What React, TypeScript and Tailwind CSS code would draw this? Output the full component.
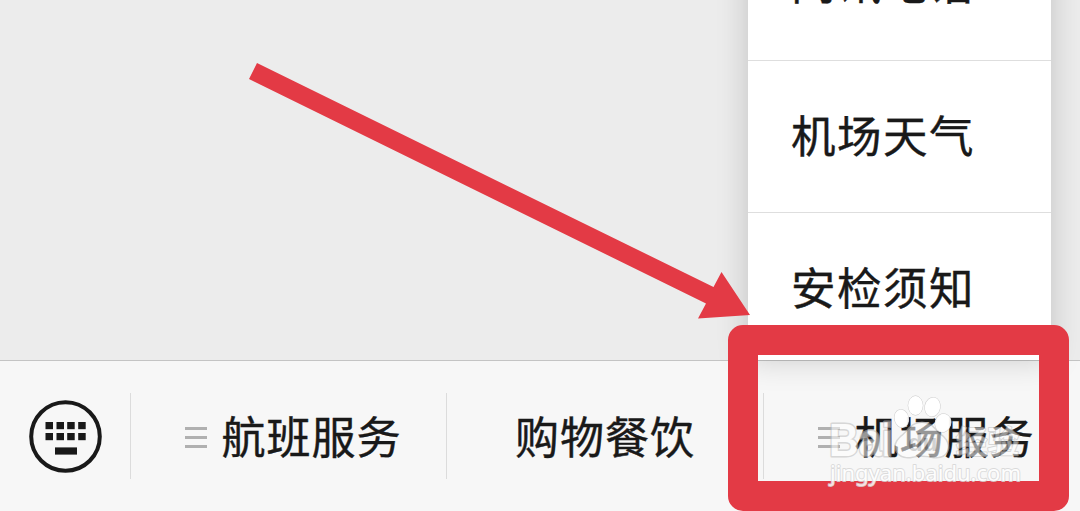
import React from "react";

const menuItems = ["问讯电话", "机场天气", "安检须知"];

const tabs = [
  { label: "航班服务", hasMenu: true },
  { label: "购物餐饮", hasMenu: false },
  { label: "机场服务", hasMenu: true },
];

const KeyboardIcon = () => (
  <svg width="74" height="74" viewBox="0 0 74 74" fill="#191919">
    <circle cx="37.5" cy="37.5" r="34.3" fill="none" stroke="#191919" strokeWidth="4" />
    {[17.5, 28.5, 39.2, 50.2].map((x) => (
      <React.Fragment key={x}>
        <rect x={x} y="23" width="7.5" height="7.2" />
        <rect x={x} y="34" width="7.5" height="7.2" />
      </React.Fragment>
    ))}
    <rect x="27" y="48.4" width="22" height="7.2" />
  </svg>
);

const MenuLines = () => (
  <div className="mt-[3px] flex w-[22px] shrink-0 flex-col gap-[6px]">
    <span className="h-[3px] bg-[#b0b0b0]" />
    <span className="h-[3px] bg-[#b0b0b0]" />
    <span className="h-[3px] bg-[#b0b0b0]" />
  </div>
);

const PopupMenu = () => (
  <div className="absolute bottom-[151px] left-[748px] w-[303px] bg-white shadow-[0_0_30px_rgba(0,0,0,0.18)]">
    {menuItems.map((item) => (
      <div
        key={item}
        className="h-[152px] border-t border-[#dedede] pt-[51px] pl-[43px] text-[44.5px] leading-none tracking-[1.5px] first:pt-[50px] last:h-[148px]"
      >
        {item}
      </div>
    ))}
  </div>
);

const TabBar = () => (
  <div className="flex h-[151px] items-center border-t border-[#c4c4c4] bg-[#f7f7f7]">
    <div className="flex w-[130px] shrink-0 justify-center pr-px">
      <KeyboardIcon />
    </div>
    <div className="grid flex-1 grid-cols-[316px_317px_317px]">
      {tabs.map((tab) => (
        <div
          key={tab.label}
          className={`flex h-[86px] min-w-0 items-center border-l border-[#dcdcdc] text-[44px] leading-none tracking-[1px] whitespace-nowrap ${
            tab.hasMenu ? "gap-[14.5px] pl-[54px]" : "justify-center"
          }`}
        >
          {tab.hasMenu && <MenuLines />}
          <span className="pb-[2px]">{tab.label}</span>
        </div>
      ))}
    </div>
  </div>
);

const Arrow = () => (
  <svg className="absolute left-0 top-0" width="1080" height="511" viewBox="0 0 1080 511">
    <path d="M257 63 L713.5 287 L721.5 272 L750 315 L698 318.5 L706 303.5 L249 79 Z" fill="#e33a45" />
  </svg>
);

const Watermark = () => (
  <svg
    className="absolute left-[820px] top-[385px]"
    width="230"
    height="110"
    viewBox="0 0 230 110"
    fill="#fff"
    stroke="#bdbdbd"
    strokeLinejoin="round"
    paintOrder="stroke"
  >
    <g opacity="0.55">
      <text x="9" y="71" fontSize="46" fontWeight="bold" fontFamily="Liberation Sans" textLength="64" lengthAdjust="spacingAndGlyphs" strokeWidth="3">
        Bai
      </text>
      <path strokeWidth="3" d="M102 38 C91 38 88 47 81 52 C70 62 78 73 90 72 C98 70 106 70 114 72 C128 73 132 61 123 52 C115 47 113 38 102 38 Z" />
      <text x="136" y="68" fontSize="31" fontWeight="bold" fontFamily="Noto Sans CJK SC" textLength="63" lengthAdjust="spacingAndGlyphs" strokeWidth="2">
        经验
      </text>
      <text x="88" y="66" fontSize="24" fontWeight="bold" fontFamily="Liberation Sans" fill="#b4b4b4" stroke="none">
        du
      </text>
    </g>
    <g fillOpacity="0.95" stroke="#cfcfcf">
      <ellipse cx="81.5" cy="33.5" rx="7" ry="9" transform="rotate(-12 81.5 33.5)" />
      <ellipse cx="95.5" cy="20.5" rx="7.3" ry="9.6" />
      <ellipse cx="112.5" cy="22" rx="7.6" ry="9.6" transform="rotate(12 112.5 22)" />
      <ellipse cx="123" cy="38" rx="7.8" ry="9.3" transform="rotate(18 123 38)" />
    </g>
    <text x="10" y="96" fontSize="22" fontFamily="Noto Sans" opacity="0.85" textLength="191" stroke="#d6d6d6" strokeWidth="1.8">
      jingyan.baidu.com
    </text>
  </svg>
);

const App = () => {
  return (
    <main className="relative flex h-[511px] w-[1080px] flex-col justify-end overflow-hidden bg-[#ececec] font-['Noto_Sans_CJK_SC',sans-serif] text-[#191919] [-webkit-text-stroke:0.4px_#191919]">
      <TabBar />
      <PopupMenu />
      <div className="absolute left-[728px] top-[325px] h-[186px] w-[341px] rounded-[15px] border-[30px] border-[#e33a45]" />
      <Arrow />
      <div className="[-webkit-text-stroke:0]">
        <Watermark />
      </div>
    </main>
  );
};

export default App;
